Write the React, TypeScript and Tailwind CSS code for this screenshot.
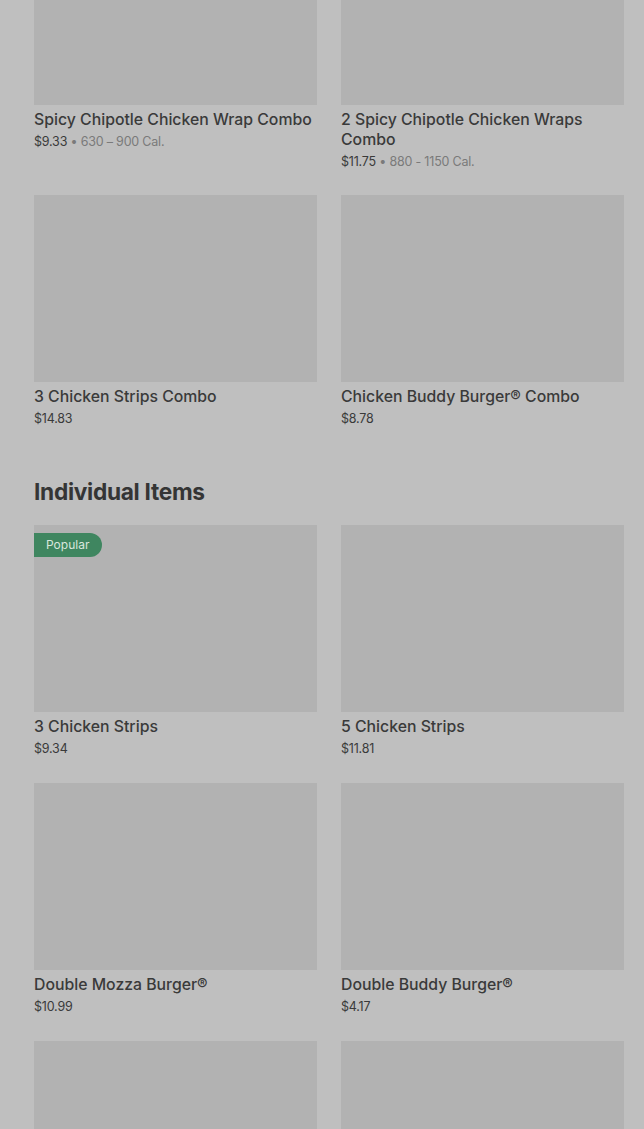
import React from 'react';

type Item = {
  name: string;
  price: string;
  cal?: string;
  popular?: boolean;
};

const combos: Item[] = [
  { name: 'Spicy Chipotle Chicken Wrap Combo', price: '$9.33', cal: '630 – 900 Cal.' },
  { name: '2 Spicy Chipotle Chicken Wraps Combo', price: '$11.75', cal: '880 - 1150 Cal.' },
  { name: '3 Chicken Strips Combo', price: '$14.83' },
  { name: 'Chicken Buddy Burger® Combo', price: '$8.78' },
];

const individual: Item[] = [
  { name: '3 Chicken Strips', price: '$9.34', popular: true },
  { name: '5 Chicken Strips', price: '$11.81' },
  { name: 'Double Mozza Burger®', price: '$10.99' },
  { name: 'Double Buddy Burger®', price: '$4.17' },
  { name: 'Bacon Mozza Burger®', price: '$9.49' },
  { name: 'Mozza Burger®', price: '$8.29' },
];

function ItemCard({ item }: { item: Item }) {
  return (
    <div className="flex flex-col">
      <div className="relative h-[187px] bg-[#b2b2b2]">
        {item.popular && (
          <span className="absolute left-0 top-[8px] h-[24px] w-[68px] rounded-r-full bg-[#3f8660] pl-[12px] text-[12px] leading-[24px] text-[#d9e6dd]">
            Popular
          </span>
        )}
      </div>
      <div className="mt-[5px] text-[15.8px] font-medium leading-[20px] text-[#3a3a3a]">{item.name}</div>
      <div className="mt-[3px] text-[12.5px] leading-[18px] tracking-[-0.2px] text-[#3a3a3a]">
        {item.price}
        {item.cal && <span className="text-[#7a7a7a]"> • {item.cal}</span>}
      </div>
    </div>
  );
}

export default function App() {
  return (
    <div
      className="h-[1129px] overflow-hidden bg-[#bfbfbf]"
      style={{ fontFamily: 'Inter, "Noto Sans", sans-serif' }}
    >
      <div className="-mt-[82px] pl-[34px] pr-[20px]">
        <div className="grid grid-cols-2 gap-x-[24px] gap-y-[24px]">
          {combos.map(c => (
            <ItemCard key={c.name} item={c} />
          ))}
        </div>

        <h2 className="mt-[50px] text-[22.7px] font-bold leading-[28px] tracking-[-0.3px] text-[#353535]">
          Individual Items
        </h2>

        <div className="mt-[19px] grid grid-cols-2 gap-x-[24px] gap-y-[25px]">
          {individual.map(c => (
            <ItemCard key={c.name} item={c} />
          ))}
        </div>
      </div>
    </div>
  );
}
